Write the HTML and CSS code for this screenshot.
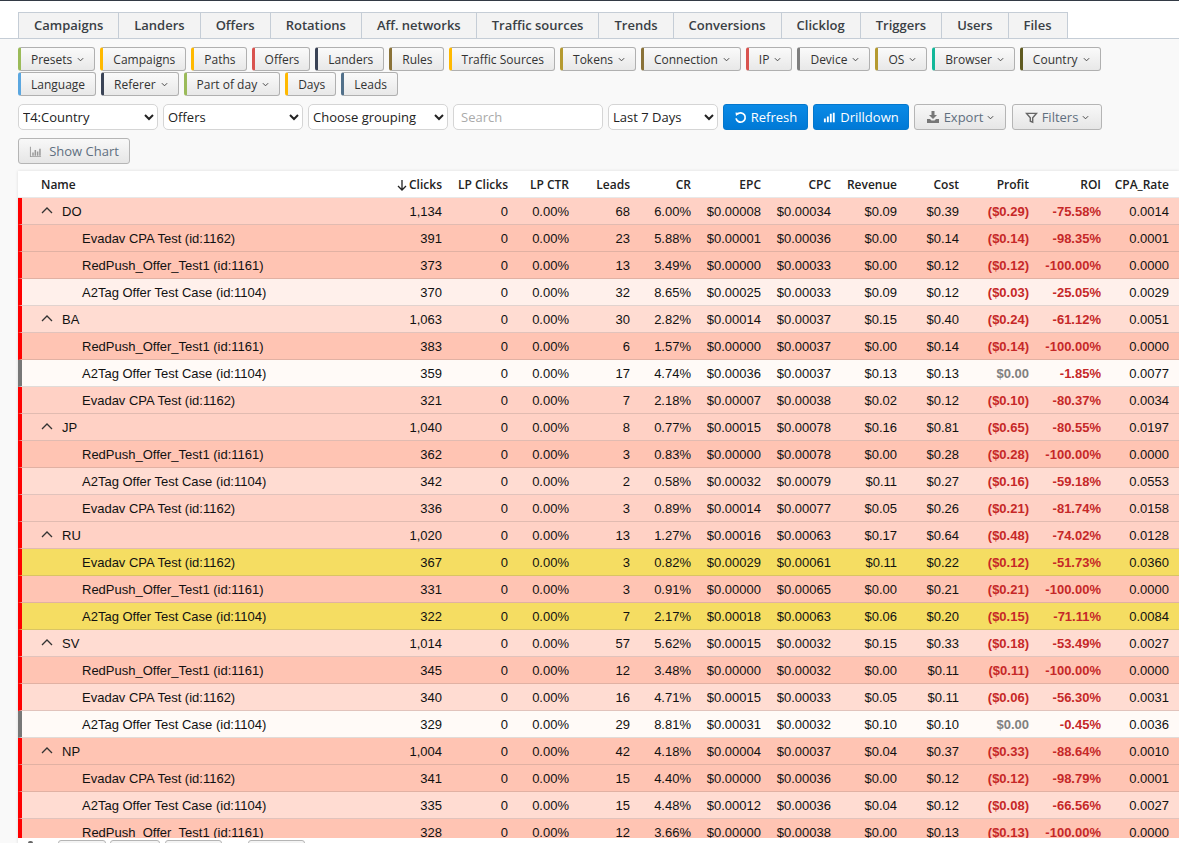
FILE: index.html
```html
<!DOCTYPE html>
<html lang="en">
<head>
<meta charset="utf-8">
<title>Report</title>
<link rel="stylesheet" href="styles.css">
</head>
<body>
<nav class="tabs">
  <a class="tab">Campaigns</a><a class="tab">Landers</a><a class="tab">Offers</a><a class="tab">Rotations</a><a class="tab">Aff. networks</a><a class="tab">Traffic sources</a><a class="tab">Trends</a><a class="tab">Conversions</a><a class="tab">Clicklog</a><a class="tab">Triggers</a><a class="tab">Users</a><a class="tab">Files</a>
</nav>
<section class="toolbar">
  <div class="chips">
    <button class="chip c-green">Presets <svg class="caret" viewBox="0 0 8 5"><path d="M1 1l3 3 3-3"/></svg></button>
    <button class="chip c-amber">Campaigns</button>
    <button class="chip c-amber">Paths</button>
    <button class="chip c-red">Offers</button>
    <button class="chip c-navy">Landers</button>
    <button class="chip c-brown">Rules</button>
    <button class="chip c-amber">Traffic Sources</button>
    <button class="chip c-gold">Tokens <svg class="caret" viewBox="0 0 8 5"><path d="M1 1l3 3 3-3"/></svg></button>
    <button class="chip c-brown">Connection <svg class="caret" viewBox="0 0 8 5"><path d="M1 1l3 3 3-3"/></svg></button>
    <button class="chip c-red">IP <svg class="caret" viewBox="0 0 8 5"><path d="M1 1l3 3 3-3"/></svg></button>
    <button class="chip c-gray">Device <svg class="caret" viewBox="0 0 8 5"><path d="M1 1l3 3 3-3"/></svg></button>
    <button class="chip c-gold">OS <svg class="caret" viewBox="0 0 8 5"><path d="M1 1l3 3 3-3"/></svg></button>
    <button class="chip c-teal">Browser <svg class="caret" viewBox="0 0 8 5"><path d="M1 1l3 3 3-3"/></svg></button>
    <button class="chip c-olive">Country <svg class="caret" viewBox="0 0 8 5"><path d="M1 1l3 3 3-3"/></svg></button>
    <button class="chip c-blue">Language</button>
    <button class="chip c-navy">Referer <svg class="caret" viewBox="0 0 8 5"><path d="M1 1l3 3 3-3"/></svg></button>
    <button class="chip c-green">Part of day <svg class="caret" viewBox="0 0 8 5"><path d="M1 1l3 3 3-3"/></svg></button>
    <button class="chip c-amber">Days</button>
    <button class="chip c-slate">Leads</button>
  </div>
  <div class="controls">
    <select class="field w-140"><option>T4:Country</option></select>
    <select class="field w-140"><option>Offers</option></select>
    <select class="field w-140"><option>Choose grouping</option></select>
    <input class="field search" placeholder="Search">
    <select class="field w-110"><option>Last 7 Days</option></select>
    <button class="btn primary w-refresh"><svg class="ico" viewBox="0 0 14 14"><path class="stroke-w" d="M3.4 3.6A5 5 0 1 1 2.2 8"/><path class="fill-w" d="M1.6 1.6l4.4.6-3.8 3.2z"/></svg>Refresh</button>
    <button class="btn primary w-drill"><svg class="ico" viewBox="0 0 14 14"><path class="fill-w" d="M1 8h2v4H1zM4.2 6h2v6h-2zM7.4 3h2v9h-2zM10.6 2h2v10h-2z"/></svg>Drilldown</button>
    <button class="btn muted w-export"><svg class="ico ico-lg" viewBox="0 0 14 14"><path class="fill-g" d="M5.5 1h3v4H11L7 9 3 5h2.5zM1 9h3l1.5 1.5h3L10 9h3v4H1z"/></svg>Export <svg class="caret" viewBox="0 0 8 5"><path d="M1 1l3 3 3-3"/></svg></button>
    <button class="btn muted w-filter"><svg class="ico" viewBox="0 0 14 14"><path class="stroke-g" d="M1.5 2.5h11L8.3 7.4V12l-2.6-1V7.4z"/></svg>Filters <svg class="caret" viewBox="0 0 8 5"><path d="M1 1l3 3 3-3"/></svg></button>
  </div>
  <button class="btn muted w-chart"><svg class="ico" viewBox="0 0 14 14"><path class="fill-l" d="M1 2h1v10h11v1H1zM3.5 8h1.6v3.5H3.5zM6 5.5h1.6v6H6zM8.5 7h1.6v4.5H8.5zM11 4h1.6v7.5H11z"/></svg>Show Chart</button>
</section>
<section class="report">
<div class="scroller">
<table class="grid">
  <colgroup>
    <col class="k-name"><col class="k-clicks"><col class="k-66"><col class="k-61"><col class="k-61"><col class="k-61"><col class="k-70"><col class="k-70"><col class="k-66"><col class="k-62"><col class="k-70"><col class="k-72"><col class="k-68">
  </colgroup>
  <thead>
    <tr><th class="name">Name</th><th><svg class="sort" viewBox="0 0 10 12"><path d="M5 1v10M1 7l4 4 4-4"/></svg>Clicks</th><th>LP Clicks</th><th>LP CTR</th><th>Leads</th><th>CR</th><th>EPC</th><th>CPC</th><th>Revenue</th><th>Cost</th><th>Profit</th><th>ROI</th><th>CPA_Rate</th></tr>
  </thead>
  <tbody>
    <tr class="heat-2 group"><td class="name"><svg class="fold" viewBox="0 0 12 7"><path d="M1 6l5-5 5 5"/></svg>DO</td><td>1,134</td><td>0</td><td>0.00%</td><td>68</td><td>6.00%</td><td>$0.00008</td><td>$0.00034</td><td>$0.09</td><td>$0.39</td><td class="neg">($0.29)</td><td class="neg">-75.58%</td><td>0.0014</td></tr>
    <tr class="heat-1"><td class="name child">Evadav CPA Test (id:1162)</td><td>391</td><td>0</td><td>0.00%</td><td>23</td><td>5.88%</td><td>$0.00001</td><td>$0.00036</td><td>$0.00</td><td>$0.14</td><td class="neg">($0.14)</td><td class="neg">-98.35%</td><td>0.0001</td></tr>
    <tr class="heat-1"><td class="name child">RedPush_Offer_Test1 (id:1161)</td><td>373</td><td>0</td><td>0.00%</td><td>13</td><td>3.49%</td><td>$0.00000</td><td>$0.00033</td><td>$0.00</td><td>$0.12</td><td class="neg">($0.12)</td><td class="neg">-100.00%</td><td>0.0000</td></tr>
    <tr class="heat-4"><td class="name child">A2Tag Offer Test Case (id:1104)</td><td>370</td><td>0</td><td>0.00%</td><td>32</td><td>8.65%</td><td>$0.00025</td><td>$0.00033</td><td>$0.09</td><td>$0.12</td><td class="neg">($0.03)</td><td class="neg">-25.05%</td><td>0.0029</td></tr>

    <tr class="heat-3 group"><td class="name"><svg class="fold" viewBox="0 0 12 7"><path d="M1 6l5-5 5 5"/></svg>BA</td><td>1,063</td><td>0</td><td>0.00%</td><td>30</td><td>2.82%</td><td>$0.00014</td><td>$0.00037</td><td>$0.15</td><td>$0.40</td><td class="neg">($0.24)</td><td class="neg">-61.12%</td><td>0.0051</td></tr>
    <tr class="heat-1"><td class="name child">RedPush_Offer_Test1 (id:1161)</td><td>383</td><td>0</td><td>0.00%</td><td>6</td><td>1.57%</td><td>$0.00000</td><td>$0.00037</td><td>$0.00</td><td>$0.14</td><td class="neg">($0.14)</td><td class="neg">-100.00%</td><td>0.0000</td></tr>
    <tr class="heat-5 even"><td class="name child">A2Tag Offer Test Case (id:1104)</td><td>359</td><td>0</td><td>0.00%</td><td>17</td><td>4.74%</td><td>$0.00036</td><td>$0.00037</td><td>$0.13</td><td>$0.13</td><td class="zero">$0.00</td><td class="neg">-1.85%</td><td>0.0077</td></tr>
    <tr class="heat-2"><td class="name child">Evadav CPA Test (id:1162)</td><td>321</td><td>0</td><td>0.00%</td><td>7</td><td>2.18%</td><td>$0.00007</td><td>$0.00038</td><td>$0.02</td><td>$0.12</td><td class="neg">($0.10)</td><td class="neg">-80.37%</td><td>0.0034</td></tr>

    <tr class="heat-2 group"><td class="name"><svg class="fold" viewBox="0 0 12 7"><path d="M1 6l5-5 5 5"/></svg>JP</td><td>1,040</td><td>0</td><td>0.00%</td><td>8</td><td>0.77%</td><td>$0.00015</td><td>$0.00078</td><td>$0.16</td><td>$0.81</td><td class="neg">($0.65)</td><td class="neg">-80.55%</td><td>0.0197</td></tr>
    <tr class="heat-1"><td class="name child">RedPush_Offer_Test1 (id:1161)</td><td>362</td><td>0</td><td>0.00%</td><td>3</td><td>0.83%</td><td>$0.00000</td><td>$0.00078</td><td>$0.00</td><td>$0.28</td><td class="neg">($0.28)</td><td class="neg">-100.00%</td><td>0.0000</td></tr>
    <tr class="heat-3"><td class="name child">A2Tag Offer Test Case (id:1104)</td><td>342</td><td>0</td><td>0.00%</td><td>2</td><td>0.58%</td><td>$0.00032</td><td>$0.00079</td><td>$0.11</td><td>$0.27</td><td class="neg">($0.16)</td><td class="neg">-59.18%</td><td>0.0553</td></tr>
    <tr class="heat-2"><td class="name child">Evadav CPA Test (id:1162)</td><td>336</td><td>0</td><td>0.00%</td><td>3</td><td>0.89%</td><td>$0.00014</td><td>$0.00077</td><td>$0.05</td><td>$0.26</td><td class="neg">($0.21)</td><td class="neg">-81.74%</td><td>0.0158</td></tr>

    <tr class="heat-2 group"><td class="name"><svg class="fold" viewBox="0 0 12 7"><path d="M1 6l5-5 5 5"/></svg>RU</td><td>1,020</td><td>0</td><td>0.00%</td><td>13</td><td>1.27%</td><td>$0.00016</td><td>$0.00063</td><td>$0.17</td><td>$0.64</td><td class="neg">($0.48)</td><td class="neg">-74.02%</td><td>0.0128</td></tr>
    <tr class="heat-y"><td class="name child">Evadav CPA Test (id:1162)</td><td>367</td><td>0</td><td>0.00%</td><td>3</td><td>0.82%</td><td>$0.00029</td><td>$0.00061</td><td>$0.11</td><td>$0.22</td><td class="neg">($0.12)</td><td class="neg">-51.73%</td><td>0.0360</td></tr>
    <tr class="heat-1"><td class="name child">RedPush_Offer_Test1 (id:1161)</td><td>331</td><td>0</td><td>0.00%</td><td>3</td><td>0.91%</td><td>$0.00000</td><td>$0.00065</td><td>$0.00</td><td>$0.21</td><td class="neg">($0.21)</td><td class="neg">-100.00%</td><td>0.0000</td></tr>
    <tr class="heat-y"><td class="name child">A2Tag Offer Test Case (id:1104)</td><td>322</td><td>0</td><td>0.00%</td><td>7</td><td>2.17%</td><td>$0.00018</td><td>$0.00063</td><td>$0.06</td><td>$0.20</td><td class="neg">($0.15)</td><td class="neg">-71.11%</td><td>0.0084</td></tr>

    <tr class="heat-3 group"><td class="name"><svg class="fold" viewBox="0 0 12 7"><path d="M1 6l5-5 5 5"/></svg>SV</td><td>1,014</td><td>0</td><td>0.00%</td><td>57</td><td>5.62%</td><td>$0.00015</td><td>$0.00032</td><td>$0.15</td><td>$0.33</td><td class="neg">($0.18)</td><td class="neg">-53.49%</td><td>0.0027</td></tr>
    <tr class="heat-1"><td class="name child">RedPush_Offer_Test1 (id:1161)</td><td>345</td><td>0</td><td>0.00%</td><td>12</td><td>3.48%</td><td>$0.00000</td><td>$0.00032</td><td>$0.00</td><td>$0.11</td><td class="neg">($0.11)</td><td class="neg">-100.00%</td><td>0.0000</td></tr>
    <tr class="heat-3"><td class="name child">Evadav CPA Test (id:1162)</td><td>340</td><td>0</td><td>0.00%</td><td>16</td><td>4.71%</td><td>$0.00015</td><td>$0.00033</td><td>$0.05</td><td>$0.11</td><td class="neg">($0.06)</td><td class="neg">-56.30%</td><td>0.0031</td></tr>
    <tr class="heat-5 even"><td class="name child">A2Tag Offer Test Case (id:1104)</td><td>329</td><td>0</td><td>0.00%</td><td>29</td><td>8.81%</td><td>$0.00031</td><td>$0.00032</td><td>$0.10</td><td>$0.10</td><td class="zero">$0.00</td><td class="neg">-0.45%</td><td>0.0036</td></tr>

    <tr class="heat-1 group"><td class="name"><svg class="fold" viewBox="0 0 12 7"><path d="M1 6l5-5 5 5"/></svg>NP</td><td>1,004</td><td>0</td><td>0.00%</td><td>42</td><td>4.18%</td><td>$0.00004</td><td>$0.00037</td><td>$0.04</td><td>$0.37</td><td class="neg">($0.33)</td><td class="neg">-88.64%</td><td>0.0010</td></tr>
    <tr class="heat-1"><td class="name child">Evadav CPA Test (id:1162)</td><td>341</td><td>0</td><td>0.00%</td><td>15</td><td>4.40%</td><td>$0.00000</td><td>$0.00036</td><td>$0.00</td><td>$0.12</td><td class="neg">($0.12)</td><td class="neg">-98.79%</td><td>0.0001</td></tr>
    <tr class="heat-3"><td class="name child">A2Tag Offer Test Case (id:1104)</td><td>335</td><td>0</td><td>0.00%</td><td>15</td><td>4.48%</td><td>$0.00012</td><td>$0.00036</td><td>$0.04</td><td>$0.12</td><td class="neg">($0.08)</td><td class="neg">-66.56%</td><td>0.0027</td></tr>
    <tr class="heat-1 last"><td class="name child">RedPush_Offer_Test1 (id:1161)</td><td>328</td><td>0</td><td>0.00%</td><td>12</td><td>3.66%</td><td>$0.00000</td><td>$0.00038</td><td>$0.00</td><td>$0.13</td><td class="neg">($0.13)</td><td class="neg">-100.00%</td><td>0.0000</td></tr>
  </tbody>
</table>
</div>
<div class="pager">
  <span class="pg-mark"></span><span class="pg pg-48"></span><span class="pg pg-50"></span><span class="pg pg-57"></span><span class="pg pg-57 pg-far"></span>
</div>
</section>
</body>
</html>
```
FILE: styles.css
```css
* { box-sizing: border-box; }
html, body { margin: 0; padding: 0; height: 843px; overflow: hidden; }
body { background: #f9f9f9; font-family: "Open Sans", sans-serif; color: #333; border-top: 1px solid #333a45; }

.tabs { display: flex; background: #fff; padding: 11px 0 0 18px; height: 38px; border-bottom: 1px solid #c5cdd6; }
.tab { height: 26px; padding: 0 15px 2px; display: flex; align-items: center; font-size: 13px; font-weight: 600; color: #3a3f45; background: #f3f3f3; border: 1px solid #c5cdd6; border-bottom: 0; margin-left: -1px; }
.tab:first-child { margin-left: 0; }

.toolbar { padding: 8px 0 0 18px; }
.chips { display: flex; flex-wrap: wrap; gap: 1px 5px; width: 1090px; }
.chip { height: 24px; padding: 0 10px; font: 12px "Open Sans", sans-serif; color: #333; border: 1px solid #b0b0b0; border-left-width: 3px; border-radius: 3px; background: linear-gradient(#fafafa, #e8e8e8); display: flex; align-items: center; gap: 5px; white-space: nowrap; }
.caret { width: 7px; height: 5px; fill: none; stroke: #444; stroke-width: 1.1; }
.c-green { border-left-color: #9bbb59; }
.c-amber { border-left-color: #ffb900; }
.c-red { border-left-color: #d9534f; }
.c-navy { border-left-color: #3a4356; }
.c-brown { border-left-color: #8a7238; }
.c-gold { border-left-color: #b59a30; }
.c-gray { border-left-color: #7f7f7f; }
.c-teal { border-left-color: #13b89a; }
.c-olive { border-left-color: #5f5a20; }
.c-blue { border-left-color: #5ba7e0; }
.c-slate { border-left-color: #51708a; }

.controls { display: flex; gap: 5px; margin-top: 8px; height: 26px; }
.field { height: 26px; border: 1px solid #d5d5d5; border-radius: 5px; background: #fff; font: 13px "Open Sans", sans-serif; color: #222; padding: 0; }
.w-140 { width: 140px; }
.w-110 { width: 110px; }
.search { width: 150px; padding-left: 7px; }
.search::placeholder { color: #aaa; }

.btn { height: 26px; font: 13px "Open Sans", sans-serif; border-radius: 3px; display: inline-flex; align-items: center; justify-content: center; gap: 4px; padding: 0; white-space: nowrap; }
.primary { background: linear-gradient(#0a8ae6, #0079d6); border: 1px solid #0477cc; color: #fff; }
.muted { background: linear-gradient(#f8f8f8, #e6e6e6); border: 1px solid #b5b5b5; color: #5f6f7f; }
.w-refresh { width: 85px; }
.w-drill { width: 96px; }
.w-export { width: 92px; }
.w-filter { width: 90px; margin-left: 1px; }
.w-chart { width: 112px; margin-top: 8px; gap: 7px; }
.ico { width: 13px; height: 13px; flex: none; }
.ico-lg { width: 14px; height: 14px; }
.stroke-w { fill: none; stroke: #fff; stroke-width: 1.9; }
.fill-w { fill: #fff; }
.fill-g { fill: #777; }
.fill-l { fill: #999; }
.stroke-g { fill: none; stroke: #666; stroke-width: 1.5; }

.report { margin: 7px 0 0 18px; background: #fff; box-shadow: 0 0 3px rgba(0,0,0,.12); }
.scroller { height: 667px; overflow: hidden; }
.grid { width: 1161px; table-layout: fixed; border-collapse: separate; border-spacing: 0; }
.k-name { width: 354px; }
.k-clicks { width: 80px; }
.k-66 { width: 66px; }
.k-61 { width: 61px; }
.k-70 { width: 70px; }
.k-62 { width: 62px; }
.k-72 { width: 72px; }
.k-68 { width: 68px; }
.grid th { height: 27px; padding: 0 10px 0 0; font-size: 12px; font-weight: 600; color: #222; text-align: right; white-space: nowrap; background: #fff; border-bottom: 1px solid #e8e8e8; }
.grid th.name { text-align: left; padding-left: 23px; }
.sort { width: 10px; height: 12px; fill: none; stroke: #222; stroke-width: 1.3; margin-right: 2px; vertical-align: -2px; }
.grid td { height: 27px; padding: 0 10px 0 0; font: 13px "Liberation Sans", Arial, sans-serif; color: #111; text-align: right; white-space: nowrap; border-bottom: 1px solid rgba(120,110,110,.22); }
.grid td.name { text-align: left; padding-left: 19px; border-left: 4px solid #f00; }
.grid td.child { padding-left: 60px; }
.fold { width: 12px; height: 7px; fill: none; stroke: #333; stroke-width: 1.3; margin-right: 9px; vertical-align: 2px; }
.even td.name { border-left-color: #777; }
.grid td.neg { color: #c62828; font-weight: 700; }
.grid td.zero { color: #808080; font-weight: 700; }
.heat-1 { background: #ffc4b3; }
.heat-2 { background: #ffd1c5; }
.heat-3 { background: #ffdcd2; }
.heat-4 { background: #fff0eb; }
.heat-5 { background: #fffaf7; }
.heat-y { background: #f5dd62; }

.pager { display: flex; padding: 2px 0 0 10px; height: 40px; background: #fff; }
.pg-mark { width: 5px; height: 3px; margin: 1px 25px 0 0; background: #666; border-radius: 2px 2px 0 0; }
.pg { height: 26px; border: 1px solid #b5b5b5; border-radius: 3px; background: #f4f4f4; margin-right: 4px; }
.pg-48 { width: 48px; }
.pg-50 { width: 50px; margin-right: 5px; }
.pg-57 { width: 57px; }
.pg-far { margin-left: 22px; }
```
